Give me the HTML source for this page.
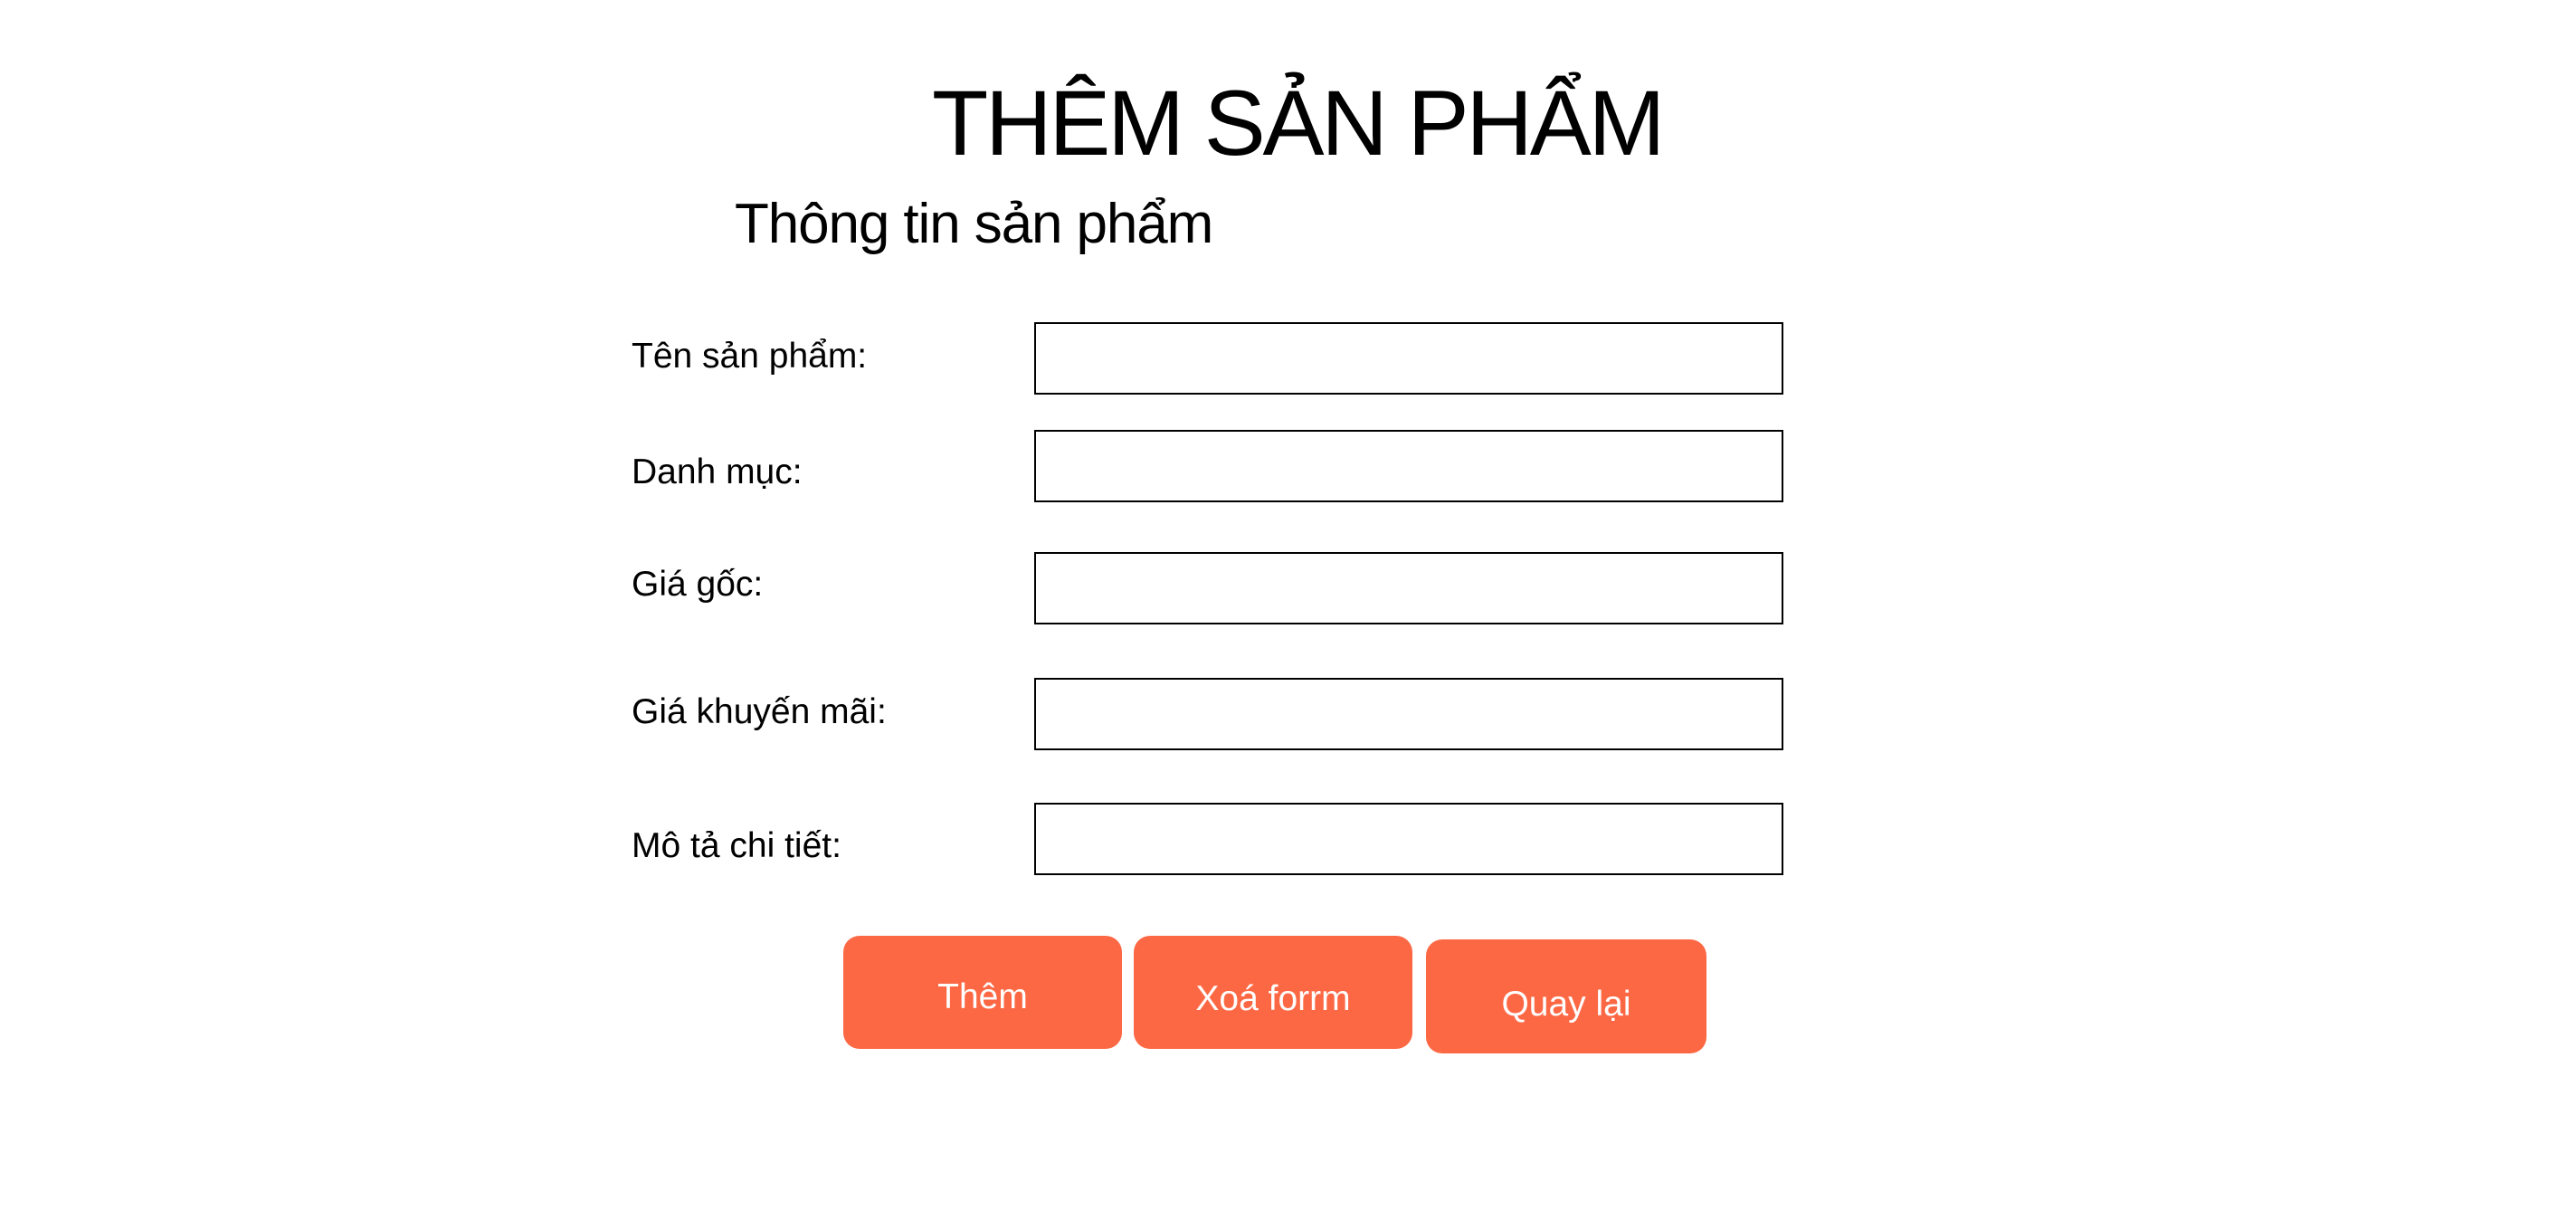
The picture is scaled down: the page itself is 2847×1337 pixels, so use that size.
<!DOCTYPE html>
<html><head><meta charset="utf-8"><style>
html,body{margin:0;padding:0;background:#fff;}
body{width:2847px;height:1337px;position:relative;overflow:hidden;font-family:"Liberation Sans",sans-serif;color:#000;}
.t{position:absolute;white-space:nowrap;line-height:1;}
.box{position:absolute;left:1143px;width:824px;height:76px;border:2px solid #000;background:#fff;}
.btn{position:absolute;background:#FD6844;border-radius:18px;color:#fff;font-size:39px;text-align:center;}
.btn span{position:absolute;left:0;right:0;line-height:1;}
</style></head><body>
<div class="t" style="left:1030px;top:85px;font-size:102px;letter-spacing:-3.3px;">THÊM SẢN PHẨM</div>
<div class="t" style="left:812px;top:217px;font-size:62px;letter-spacing:-1.1px;">Thông tin sản phẩm</div>

<div class="t" style="left:698px;top:374px;font-size:39px;">Tên sản phẩm:</div>
<div class="t" style="left:698px;top:502px;font-size:39px;">Danh mục:</div>
<div class="t" style="left:698px;top:626px;font-size:39px;">Giá gốc:</div>
<div class="t" style="left:698px;top:767px;font-size:39px;">Giá khuyến mãi:</div>
<div class="t" style="left:698px;top:915px;font-size:39px;">Mô tả chi tiết:</div>

<div class="box" style="top:356px;"></div>
<div class="box" style="top:475px;"></div>
<div class="box" style="top:610px;"></div>
<div class="box" style="top:749px;"></div>
<div class="box" style="top:887px;"></div>

<div class="btn" style="left:932px;top:1034px;width:308px;height:125px;"><span style="top:48px;">Thêm</span></div>
<div class="btn" style="left:1253px;top:1034px;width:308px;height:125px;"><span style="top:50px;">Xoá forrm</span></div>
<div class="btn" style="left:1576px;top:1038px;width:310px;height:126px;"><span style="top:52px;">Quay lại</span></div>
</body></html>
